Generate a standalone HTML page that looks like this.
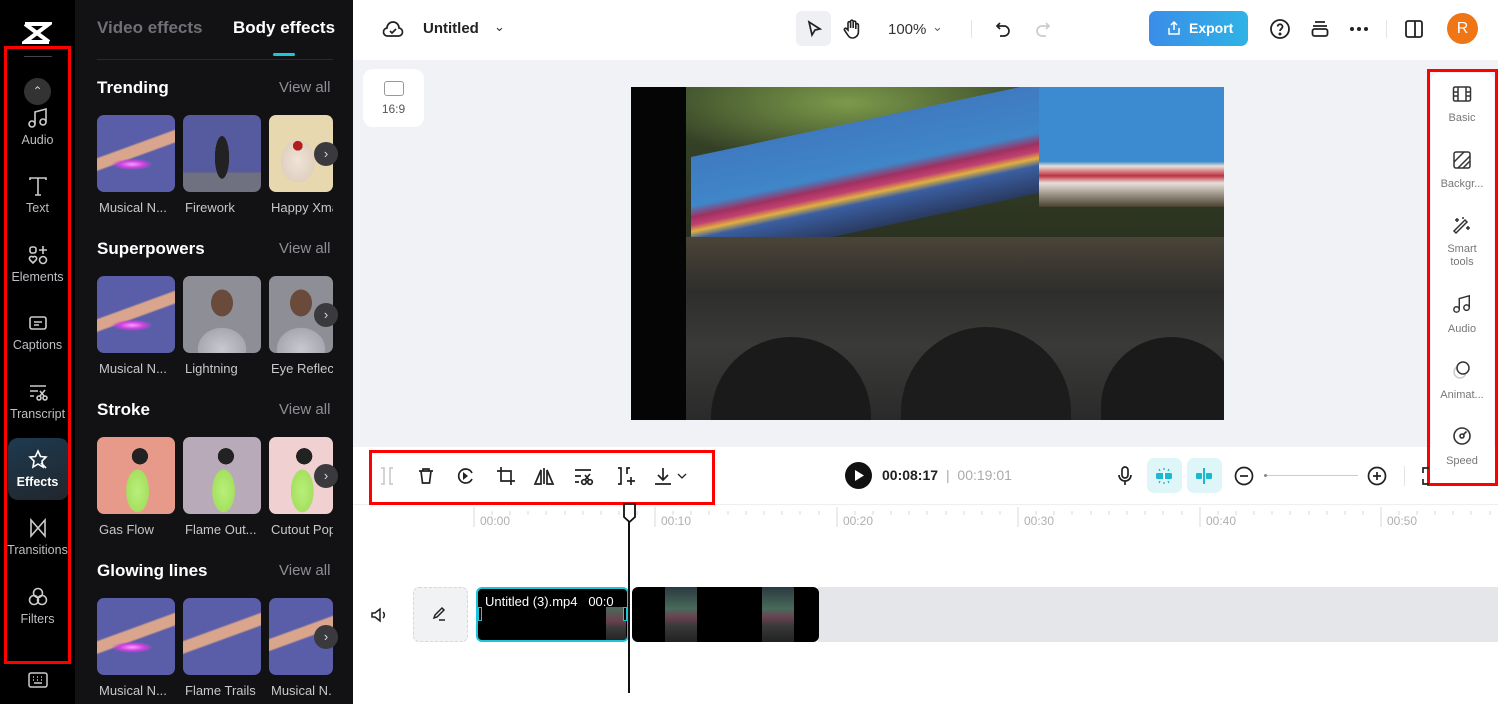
<!DOCTYPE html>
<html><head><meta charset="utf-8"><style>
*{box-sizing:border-box;margin:0;padding:0}
body{width:1498px;height:704px;overflow:hidden;font-family:"Liberation Sans",sans-serif;background:#fff;position:relative}
.a{position:absolute}
#nav{left:0;top:0;width:75px;height:704px;background:#000}
#panel{left:75px;top:0;width:278px;height:704px;background:#121215}
.ni{position:absolute;left:0;width:75px;text-align:center;color:#bfbfc4;font-size:12.5px}
.ni svg{display:block;margin:0 auto 4px}
.h{position:absolute;left:22px;color:#fff;font-weight:bold;font-size:17px}
.va{position:absolute;left:204px;color:#8e8e94;font-size:15px}
.th{position:absolute;width:78px;height:77px;border-radius:7px;overflow:hidden}
.lb{position:absolute;color:#c8c8cc;font-size:13px;white-space:nowrap;overflow:hidden}
.nx{position:absolute;left:239px;width:24px;height:24px;border-radius:50%;background:#3a3a3e;color:#ddd;font-size:13px;text-align:center;line-height:24px}
.hand{background:radial-gradient(ellipse 30px 8px at 45% 64%,#f5a0ff 0,#d040e0 40%,transparent 70%),linear-gradient(160deg,transparent 40%,#d9a58c 42%,#d9a58c 52%,transparent 54%),#5a5ea8}
.ppl{background:radial-gradient(ellipse 18px 22px at 50% 35%,#6a4a3a 0,#6a4a3a 60%,transparent 62%),radial-gradient(ellipse 34px 30px at 50% 95%,#c8c8d0 0,#a8a8b0 70%,transparent 72%),#8e8e96}
.strk{background:radial-gradient(ellipse 16px 30px at 52% 70%,#b7f07a 0,#a6e060 70%,transparent 72%),radial-gradient(circle 10px at 55% 25%,#222 0,#222 80%,transparent 82%),#d8c8c0}
.rp{position:absolute;width:68px;text-align:center;color:#777;font-size:11px}
.rp svg{display:block;margin:0 auto 9px}
</style></head><body>
<div id="nav" class="a">
 <svg class="a" style="left:22px;top:20px" width="30" height="26" viewBox="0 0 30 26"><path d="M3 4h24L3 22h24" stroke="#fff" stroke-width="4" fill="none"/><path d="M3 4l24 18" stroke="#fff" stroke-width="4"/></svg>
 <div class="a" style="left:24px;top:56px;width:28px;height:1px;background:#444"></div>
 <div class="a" style="left:24px;top:78px;width:27px;height:27px;border-radius:50%;background:#333;color:#ccc;text-align:center;font-size:12px;line-height:27px">&#8963;</div>
 <div class="ni" style="top:107px"><svg width="22" height="22" viewBox="0 0 22 22" fill="none" stroke="#ccc" stroke-width="1.6"><circle cx="5" cy="17" r="3"/><circle cx="16" cy="15" r="3"/><path d="M8 17V5l11-3v13"/></svg>Audio</div>
 <div class="ni" style="top:175px"><svg width="22" height="22" viewBox="0 0 22 22" fill="none" stroke="#ccc" stroke-width="1.6"><path d="M3 5V3h16v2M11 3v17M8 20h6"/></svg>Text</div>
 <div class="ni" style="top:244px"><svg width="22" height="22" viewBox="0 0 22 22" fill="none" stroke="#ccc" stroke-width="1.6"><rect x="3" y="3" width="6" height="6" rx="2"/><path d="M16 2v8M12 6h8"/><circle cx="16" cy="16" r="3.5"/><path d="M6 19l-3-3a2 2 0 013-3 2 2 0 013 3z"/></svg>Elements</div>
 <div class="ni" style="top:312px"><svg width="22" height="22" viewBox="0 0 22 22" fill="none" stroke="#ccc" stroke-width="1.6"><rect x="3" y="5" width="16" height="12" rx="2"/><path d="M7 10h8M7 13h5"/></svg>Captions</div>
 <div class="ni" style="top:381px"><svg width="22" height="22" viewBox="0 0 22 22" fill="none" stroke="#ccc" stroke-width="1.6"><path d="M3 5h16M3 10h8M3 15h4"/><circle cx="12" cy="17" r="2"/><circle cx="18" cy="17" r="2"/><path d="M13 15l5-6M17 15l-4-5"/></svg>Transcript</div>
 <div class="a" style="left:8px;top:438px;width:61px;height:62px;border-radius:10px;background:linear-gradient(160deg,#1d3a50,#22262c)"></div>
 <div class="ni" style="top:449px;color:#fff;font-weight:bold"><svg width="22" height="22" viewBox="0 0 22 22" fill="none" stroke="#fff" stroke-width="1.6"><path d="M11 2l2.5 5.5 5.5.5-4 4 1 6-5-3-5 3 1-6-4-4 5.5-.5z"/><path d="M14 14l5 5"/></svg>Effects</div>
 <div class="ni" style="top:517px"><svg width="22" height="22" viewBox="0 0 22 22" fill="none" stroke="#ccc" stroke-width="1.6"><path d="M4 3v16l14-16v16z"/></svg>Transitions</div>
 <div class="ni" style="top:586px"><svg width="22" height="22" viewBox="0 0 22 22" fill="none" stroke="#ccc" stroke-width="1.6"><circle cx="11" cy="7" r="4.5"/><circle cx="7" cy="14" r="4.5"/><circle cx="15" cy="14" r="4.5"/></svg>Filters</div>
 <div class="a" style="left:4px;top:46px;width:67px;height:618px;border:3px solid #f00"></div>
 <svg class="a" style="left:28px;top:672px" width="20" height="16" viewBox="0 0 20 16" fill="none" stroke="#ccc" stroke-width="1.5"><rect x="1" y="1" width="18" height="14" rx="2"/><path d="M5 5h1M9 5h1M13 5h1M5 8h1M9 8h1M13 8h1M6 11h8"/></svg>
</div>
<div id="panel" class="a">
 <div class="a" style="left:22px;top:18px;color:#6f6f75;font-weight:bold;font-size:17px">Video effects</div>
 <div class="a" style="left:158px;top:18px;color:#fff;font-weight:bold;font-size:17px">Body effects</div>
 <div class="a" style="left:198px;top:53px;width:22px;height:3px;background:#1fc6d9;border-radius:2px"></div>
 <div class="a" style="left:22px;top:59px;width:236px;height:1px;background:#2a2a2e"></div>

 <div class="h" style="top:78px">Trending</div><div class="va" style="top:79px">View all</div>
 <div class="th hand" style="left:22px;top:115px"></div><div class="th" style="left:108px;top:115px;background:radial-gradient(ellipse 10px 30px at 50% 55%,#222 0,#222 70%,transparent 72%),linear-gradient(#565a9e 75%,#6f7080 75%)"></div><div class="th" style="left:194px;top:115px;width:64px;background:radial-gradient(circle 8px at 45% 40%,#b31c1c 0,#b31c1c 60%,transparent 62%),radial-gradient(ellipse 24px 30px at 45% 60%,#efe4d8 0,#e0d0c0 70%,transparent 72%),#e8d8b0"></div>
 <div class="nx" style="top:142px">›</div>
 <div class="lb" style="left:24px;top:200px">Musical N...</div><div class="lb" style="left:110px;top:200px">Firework</div><div class="lb" style="left:196px;top:200px;width:62px">Happy Xmas</div>

 <div class="h" style="top:239px">Superpowers</div><div class="va" style="top:240px">View all</div>
 <div class="th hand" style="left:22px;top:276px"></div><div class="th ppl" style="left:108px;top:276px"></div><div class="th ppl" style="left:194px;top:276px;width:64px"></div>
 <div class="nx" style="top:303px">›</div>
 <div class="lb" style="left:24px;top:361px">Musical N...</div><div class="lb" style="left:110px;top:361px">Lightning</div><div class="lb" style="left:196px;top:361px;width:62px">Eye Reflect</div>

 <div class="h" style="top:400px">Stroke</div><div class="va" style="top:401px">View all</div>
 <div class="th strk" style="left:22px;top:437px;background-color:#e89a8a"></div><div class="th strk" style="left:108px;top:437px;background-color:#b8aab8"></div><div class="th strk" style="left:194px;top:437px;width:64px;background-color:#f0d0d0"></div>
 <div class="nx" style="top:464px">›</div>
 <div class="lb" style="left:24px;top:522px">Gas Flow</div><div class="lb" style="left:110px;top:522px">Flame Out...</div><div class="lb" style="left:196px;top:522px;width:62px">Cutout Pop</div>

 <div class="h" style="top:561px">Glowing lines</div><div class="va" style="top:562px">View all</div>
 <div class="th hand" style="left:22px;top:598px"></div><div class="th" style="left:108px;top:598px;background:linear-gradient(160deg,transparent 40%,#d9a58c 42%,#d9a58c 52%,transparent 54%),#5a5ea8"></div><div class="th" style="left:194px;top:598px;width:64px;background:linear-gradient(160deg,transparent 40%,#d9a58c 42%,#d9a58c 52%,transparent 54%),#5a5ea8"></div>
 <div class="nx" style="top:625px">›</div>
 <div class="lb" style="left:24px;top:683px">Musical N...</div><div class="lb" style="left:110px;top:683px">Flame Trails</div><div class="lb" style="left:196px;top:683px;width:62px">Musical N.</div>
</div>
<div class="a" style="left:353px;top:336px;width:9px;height:60px;background:#2a2a2e;border-radius:0 6px 6px 0;color:#888;font-size:10px;line-height:60px">‹</div>

<!-- top bar -->
<div class="a" style="left:353px;top:0;width:1145px;height:60px;background:#fff"></div>
<svg class="a" style="left:382px;top:18px" width="22" height="22" viewBox="0 0 22 22" fill="none" stroke="#222" stroke-width="1.7"><path d="M6 18a4 4 0 01-1-8 6 6 0 0112 0 4 4 0 01-1 8z"/><path d="M8 13l2 2 4-4"/></svg>
<div class="a" style="left:423px;top:20px;font-size:15px;font-weight:bold;color:#222">Untitled</div>
<div class="a" style="left:494px;top:19px;font-size:13px;color:#333">&#8964;</div>
<div class="a" style="left:796px;top:11px;width:35px;height:35px;background:#eef0f4;border-radius:6px"></div>
<svg class="a" style="left:804px;top:19px" width="20" height="20" viewBox="0 0 20 20" fill="none" stroke="#222" stroke-width="1.7"><path d="M5 3l11 7-5 1-3 5z"/></svg>
<svg class="a" style="left:842px;top:18px" width="20" height="22" viewBox="0 0 20 22" fill="none" stroke="#222" stroke-width="1.6"><path d="M6 12V5a1.3 1.3 0 012.6 0v5V3.5a1.3 1.3 0 012.6 0V10V4.5a1.3 1.3 0 012.6 0V11V7a1.3 1.3 0 012.6 0v7a6 6 0 01-6 6c-3 0-4-2-6-5l-2-3a1.3 1.3 0 012-1.5z"/></svg>
<div class="a" style="left:888px;top:21px;font-size:15px;color:#333">100%</div>
<div class="a" style="left:932px;top:19px;font-size:13px;color:#666">&#8964;</div>
<div class="a" style="left:971px;top:20px;width:1px;height:18px;background:#e4e4e4"></div>
<svg class="a" style="left:993px;top:19px" width="20" height="20" viewBox="0 0 20 20" fill="none" stroke="#222" stroke-width="1.7"><path d="M7 4L4 7l3 3M4 7h7a5 5 0 010 10H7"/></svg>
<svg class="a" style="left:1033px;top:19px" width="20" height="20" viewBox="0 0 20 20" fill="none" stroke="#ccc" stroke-width="1.7"><path d="M13 4l3 3-3 3M16 7H9a5 5 0 000 10h4"/></svg>
<div class="a" style="left:1149px;top:11px;width:99px;height:35px;border-radius:7px;background:linear-gradient(90deg,#3b8de8,#2fb3e6);color:#fff;font-weight:bold;font-size:14px;line-height:35px;padding-left:40px">Export</div>
<svg class="a" style="left:1166px;top:20px" width="16" height="16" viewBox="0 0 16 16" fill="none" stroke="#fff" stroke-width="1.5"><path d="M8 10V2M5 5l3-3 3 3M3 8v6h10V8"/></svg>
<svg class="a" style="left:1269px;top:18px" width="22" height="22" viewBox="0 0 22 22" fill="none" stroke="#222" stroke-width="1.8"><circle cx="11" cy="11" r="9"/><path d="M8.5 8.5a2.5 2.5 0 115 .5c0 1.5-2.5 2-2.5 4"/><circle cx="11" cy="16" r=".6" fill="#222"/></svg>
<svg class="a" style="left:1310px;top:19px" width="20" height="20" viewBox="0 0 20 20" fill="none" stroke="#222" stroke-width="1.8"><path d="M5 3h10M3 7h14"/><rect x="2.5" y="10" width="15" height="7" rx="2"/></svg>
<svg class="a" style="left:1349px;top:26px" width="20" height="6" viewBox="0 0 20 6"><circle cx="3" cy="3" r="2" fill="#222"/><circle cx="10" cy="3" r="2" fill="#222"/><circle cx="17" cy="3" r="2" fill="#222"/></svg>
<div class="a" style="left:1386px;top:20px;width:1px;height:18px;background:#e4e4e4"></div>
<svg class="a" style="left:1403px;top:18px" width="22" height="22" viewBox="0 0 22 22" fill="none" stroke="#222" stroke-width="1.8"><rect x="3" y="3" width="16" height="16" rx="2"/><path d="M12 3v16"/></svg>
<div class="a" style="left:1447px;top:13px;width:31px;height:31px;border-radius:50%;background:#f07514;color:#fff;text-align:center;line-height:31px;font-size:16px">R</div>

<!-- canvas -->
<div class="a" style="left:353px;top:60px;width:1145px;height:387px;background:#f0f2f5"></div>
<div class="a" style="left:363px;top:69px;width:61px;height:58px;background:#fff;border-radius:10px;text-align:center;font-size:12px;color:#555;padding-top:12px"><div style="width:20px;height:15px;border:1.5px solid #999;border-radius:3px;margin:0 auto 6px"></div>16:9</div>
<div class="a" style="left:631px;top:87px;width:593px;height:333px;overflow:hidden;background:#111">
 <div class="a" style="left:55px;top:0;width:538px;height:160px;background:radial-gradient(ellipse 200px 60px at 30% 10%,#7c9a4a,transparent),linear-gradient(#3a4a2a,#2a3020)"></div>
 <div class="a" style="left:60px;top:70px;width:350px;height:110px;background:linear-gradient(#3f7ac0 0,#3f86c8 45%,#a03060 55%,#c04070 62%,#e0b040 68%,#3a5ea0 75%,#2a3a60 100%);transform:skewY(-12deg);transform-origin:left top"></div>
 <div class="a" style="left:408px;top:0;width:185px;height:120px;background:linear-gradient(#3c8ad0 0,#3c8ad0 62%,#e8e0d8 66%,#c03040 74%,#e8e0d8 80%,#4a4030 100%)"></div>
 <div class="a" style="left:55px;top:150px;width:538px;height:183px;background:linear-gradient(#4a4438,#2e2e2c 30%,#3a3a38 60%,#2a2a2a 100%)"></div>
 <div class="a" style="left:80px;top:250px;width:160px;height:140px;border-radius:80px 80px 0 0;background:#1a1a1a"></div>
 <div class="a" style="left:270px;top:240px;width:170px;height:150px;border-radius:85px 85px 0 0;background:#1c1c1c"></div>
 <div class="a" style="left:470px;top:250px;width:140px;height:140px;border-radius:70px 70px 0 0;background:#1a1a1a"></div>
 <div class="a" style="left:0;top:0;width:55px;height:333px;background:#050505"></div>
</div>

<!-- right panel -->
<div class="a" style="left:1431px;top:73px;width:63px;height:409px;background:#fff;border-radius:8px"></div>
<div class="rp" style="left:1428px;top:85px"><svg width="20" height="18" viewBox="0 0 20 18" fill="none" stroke="#333" stroke-width="1.5"><rect x="1.5" y="2" width="17" height="14" rx="1.5"/><path d="M6 2v14M14 2v14M1.5 7h4.5M1.5 11h4.5M14 7h4.5M14 11h4.5"/></svg>Basic</div>
<div class="rp" style="left:1428px;top:151px"><svg width="20" height="18" viewBox="0 0 20 18" fill="none" stroke="#333" stroke-width="1.5"><rect x="2" y="1" width="16" height="16" rx="2"/><path d="M2 11l10-10M6 17l12-12M11 17l7-7"/></svg>Backgr...</div>
<div class="rp" style="left:1428px;top:216px;line-height:13px"><svg width="20" height="20" viewBox="0 0 20 20" fill="none" stroke="#333" stroke-width="1.5" style="margin-bottom:7px"><path d="M4 17L15 6l-2-2L2 15zM5 2v4M3 4h4M16 10v4M14 12h4M11 1v2"/></svg>Smart<br>tools</div>
<div class="rp" style="left:1428px;top:294px"><svg width="20" height="20" viewBox="0 0 22 22" fill="none" stroke="#333" stroke-width="1.6"><circle cx="5" cy="17" r="3"/><circle cx="16" cy="15" r="3"/><path d="M8 17V5l11-3v13"/></svg>Audio</div>
<div class="rp" style="left:1428px;top:360px"><svg width="20" height="20" viewBox="0 0 20 20" fill="none" stroke-width="1.5"><circle cx="8" cy="12" r="6" stroke="#ccc"/><circle cx="11" cy="8" r="6" stroke="#333" fill="#fff"/></svg>Animat...</div>
<div class="rp" style="left:1428px;top:426px"><svg width="20" height="20" viewBox="0 0 20 20" fill="none" stroke="#333" stroke-width="1.6"><circle cx="10" cy="10" r="8"/><circle cx="10" cy="10" r="2"/><path d="M11.5 8.5l3-3"/></svg>Speed</div>
<div class="a" style="left:1427px;top:69px;width:71px;height:417px;border:3px solid #f00"></div>

<!-- toolbar -->
<div class="a" style="left:353px;top:504px;width:1145px;height:1px;background:#eceef1"></div>
<svg class="a" style="left:375px;top:465px" width="340" height="22" viewBox="0 0 340 22" fill="none" stroke="#222" stroke-width="1.7">
 <path d="M6 3h3v16H6M18 3h-3v16h3" stroke="#ccc"/>
 <path d="M44 6h14M48 6V4h6v2M46 6l1.5 12h7L56 6"/>
 <path d="M97 8a7 7 0 100 6" /><path d="M88 7l5 4-5 4z" fill="#222" stroke="none"/>
 <path d="M126 2v14h14M122 6h14v14"/>
 <path d="M169 3v16M166 19l-6-0L166 5zM172 19h6l-6-14z"/>
 <path d="M200 5h16M200 11h6M200 17h4"/><circle cx="209" cy="17" r="2.3"/><circle cx="215" cy="17" r="2.3"/><path d="M210 15l5-6M214 15l-4-5"/>
 <path d="M243 3h3v16h-3M255 3h-3v6"/><path d="M256 12v8M252 16h8"/>
 <path d="M288 3v12M283 10l5 5 5-5M280 19h16"/><path d="M303 9l4 4 4-4" stroke-width="1.3"/>
</svg>
<div class="a" style="left:369px;top:450px;width:346px;height:55px;border:3px solid #f00"></div>
<div class="a" style="left:845px;top:462px;width:27px;height:27px;border-radius:50%;background:#111"></div>
<svg class="a" style="left:853px;top:469px" width="12" height="13" viewBox="0 0 12 13"><path d="M2 1l9 5.5L2 12z" fill="#fff"/></svg>
<div class="a" style="left:882px;top:467px;font-size:14px;font-weight:bold;color:#222">00:08:17</div>
<div class="a" style="left:946px;top:467px;font-size:14px;color:#aaa">|&nbsp; 00:19:01</div>
<svg class="a" style="left:1115px;top:465px" width="20" height="22" viewBox="0 0 20 22" fill="none" stroke="#222" stroke-width="1.7"><rect x="7" y="2" width="6" height="11" rx="3"/><path d="M4 10a6 6 0 0012 0M10 16v4"/></svg>
<div class="a" style="left:1147px;top:458px;width:35px;height:35px;border-radius:7px;background:#dff6f8"></div>
<svg class="a" style="left:1153px;top:465px" width="22" height="22" viewBox="0 0 22 22"><rect x="3" y="8" width="16" height="6" rx="1.5" fill="#1ab9d1"/><rect x="10" y="8" width="2" height="6" fill="#fff"/><path d="M6 4l1 2M11 3v2M16 4l-1 2M6 18l1-2M11 19v-2M16 18l-1-2" stroke="#1ab9d1" stroke-width="1.3"/></svg>
<div class="a" style="left:1187px;top:458px;width:35px;height:35px;border-radius:7px;background:#dff6f8"></div>
<svg class="a" style="left:1193px;top:465px" width="22" height="22" viewBox="0 0 22 22"><rect x="3" y="8" width="6" height="6" rx="1" fill="#1ab9d1"/><rect x="13" y="8" width="6" height="6" rx="1" fill="#1ab9d1"/><path d="M11 3v16" stroke="#1ab9d1" stroke-width="2"/></svg>
<svg class="a" style="left:1233px;top:465px" width="22" height="22" viewBox="0 0 22 22" fill="none" stroke="#222" stroke-width="1.7"><circle cx="11" cy="11" r="8.5"/><path d="M7 11h8"/></svg>
<div class="a" style="left:1264px;top:475px;width:94px;height:1px;background:#ccc"></div>
<div class="a" style="left:1264px;top:474px;width:3px;height:3px;background:#888;border-radius:50%"></div>
<svg class="a" style="left:1366px;top:465px" width="22" height="22" viewBox="0 0 22 22" fill="none" stroke="#222" stroke-width="1.7"><circle cx="11" cy="11" r="8.5"/><path d="M7 11h8M11 7v8"/></svg>
<div class="a" style="left:1404px;top:466px;width:1px;height:20px;background:#e4e4e4"></div>
<svg class="a" style="left:1421px;top:466px" width="8" height="20" viewBox="0 0 8 20" fill="none" stroke="#222" stroke-width="1.7"><path d="M8 2H2v5M2 13v5h6"/></svg>

<!-- ruler -->
<svg class="a" style="left:353px;top:505px" width="1145" height="30">
 <g stroke="#d8d8d8" stroke-width="1">
  <path d="M121 2v20M302 2v20M484 2v20M665 2v20M847 2v20M1028 2v20"/>
  <path d="M139 6v4M157 6v4M175 6v4M193 6v4M212 6v4M230 6v4M248 6v4M266 6v4M284 6v4M320 6v4M338 6v4M356 6v4M375 6v4M393 6v4M411 6v4M429 6v4M447 6v4M466 6v4M502 6v4M520 6v4M538 6v4M556 6v4M574 6v4M593 6v4M611 6v4M629 6v4M647 6v4M683 6v4M701 6v4M719 6v4M738 6v4M756 6v4M774 6v4M792 6v4M810 6v4M829 6v4M865 6v4M883 6v4M901 6v4M919 6v4M937 6v4M956 6v4M974 6v4M992 6v4M1010 6v4M1046 6v4M1064 6v4M1082 6v4M1100 6v4M1118 6v4M1137 6v4"/>
 </g>
 <g font-family="Liberation Sans" font-size="12" fill="#b0b0b0">
  <text x="127" y="20">00:00</text><text x="308" y="20">00:10</text><text x="490" y="20">00:20</text><text x="671" y="20">00:30</text><text x="853" y="20">00:40</text><text x="1034" y="20">00:50</text>
 </g>
</svg>

<!-- track -->
<svg class="a" style="left:370px;top:606px" width="18" height="18" viewBox="0 0 18 18" fill="none" stroke="#222" stroke-width="1.5"><path d="M2 7h3l5-4v12l-5-4H2z"/><path d="M13 6a4 4 0 010 6"/></svg>
<div class="a" style="left:413px;top:587px;width:55px;height:55px;border:1px dashed #d5d8dc;border-radius:6px;background:#f1f2f4"></div>
<svg class="a" style="left:430px;top:605px" width="18" height="18" viewBox="0 0 18 18" fill="none" stroke="#222" stroke-width="1.5"><path d="M4 13l1-3 7-7 2 2-7 7zM9 15h6"/></svg>
<div class="a" style="left:818px;top:587px;width:680px;height:55px;background:#e4e6e9"></div>
<div class="a" style="left:632px;top:587px;width:187px;height:55px;background:#000;border-radius:6px;overflow:hidden">
 <div class="a" style="left:33px;top:0;width:32px;height:55px;background:linear-gradient(#2a3a40,#4a6a5a 40%,#6a4050 55%,#3a3a3a 70%,#222)"></div>
 <div class="a" style="left:130px;top:0;width:32px;height:55px;background:linear-gradient(#2a3a40,#4a6a5a 40%,#6a4050 55%,#3a3a3a 70%,#222)"></div>
</div>
<div class="a" style="left:476px;top:587px;width:153px;height:55px;background:#000;border:2px solid #1ec5d8;border-radius:6px;overflow:hidden">
 <div class="a" style="left:128px;top:18px;width:20px;height:35px;background:linear-gradient(#4a6a5a,#6a4050 40%,#3a3a3a 60%,#222)"></div>
 <div class="a" style="left:7px;top:5px;color:#fff;font-size:13px;white-space:nowrap">Untitled (3).mp4&nbsp;&nbsp;&nbsp;00:0</div>
 <div class="a" style="left:0;top:18px;width:4px;height:14px;border:1.5px solid #1ec5d8;background:#000"></div>
 <div class="a" style="left:145px;top:18px;width:4px;height:14px;border:1.5px solid #1ec5d8;background:#000"></div>
</div>
<div class="a" style="left:628px;top:520px;width:2px;height:173px;background:#111"></div>
<svg class="a" style="left:622px;top:503px" width="15" height="20" viewBox="0 0 15 20"><path d="M2 1h11v13l-5.5 5L2 14z" fill="#fff" stroke="#111" stroke-width="1.8"/></svg>
</body></html>
